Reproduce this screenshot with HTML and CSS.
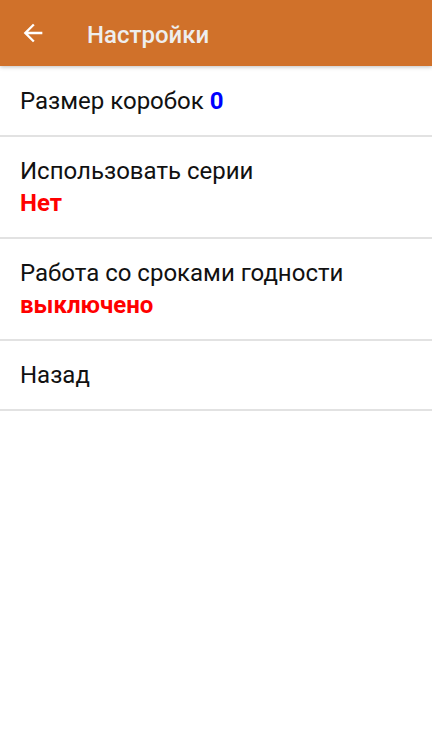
FILE: index.html
```html
<!DOCTYPE html>
<html lang="ru">
<head>
<meta charset="utf-8">
<title>Настройки</title>
<link rel="stylesheet" href="styles.css">
</head>
<body>
<header class="appbar">
  <svg class="back" viewBox="0 0 24 24" width="28" height="28"><path fill="#fff" d="M20 11H7.830l5.590-5.590L12 4l-8 8 8 8 1.410-1.410L7.830 13H20v-2z"/></svg>
  <span class="title">Настройки</span>
</header>
<main class="list">
  <div class="row short first"><span>Размер коробок <b class="blue">0</b></span></div>
  <div class="row tall"><span>Использовать серии</span><b class="red">Нет</b></div>
  <div class="row tall"><span>Работа со сроками годности</span><b class="red">выключено</b></div>
  <div class="row short"><span>Назад</span></div>
</main>
</body>
</html>
```
FILE: styles.css
```css
html, body {
  margin: 0;
  padding: 0;
  background: #fff;
  font-family: Roboto, "Noto Sans", sans-serif;
}
.appbar {
  height: 66px;
  background: #D0712A;
  display: flex;
  align-items: center;
  box-shadow: 0 1px 4px rgba(0,0,0,0.25);
  position: relative;
  z-index: 1;
}
.back {
  margin-left: 19px;
  display: block;
}
.title {
  margin-left: 40px;
  margin-top: 4px;
  color: #eeeeee;
  font-size: 24px;
  font-weight: 500;
}
.list {
  display: flex;
  flex-direction: column;
}
.row {
  display: flex;
  flex-direction: column;
  justify-content: center;
  padding-left: 20px;
  font-size: 24px;
  line-height: 32px;
  color: #111;
  border-bottom: 2px solid #e2e2e2;
}
.row.short { height: 68px; }
.row.first { height: 69px; }
.row.tall { height: 100px; }
.blue { color: #0000ff; font-weight: 700; }
.red { color: #ff0000; font-weight: 700; }
```
